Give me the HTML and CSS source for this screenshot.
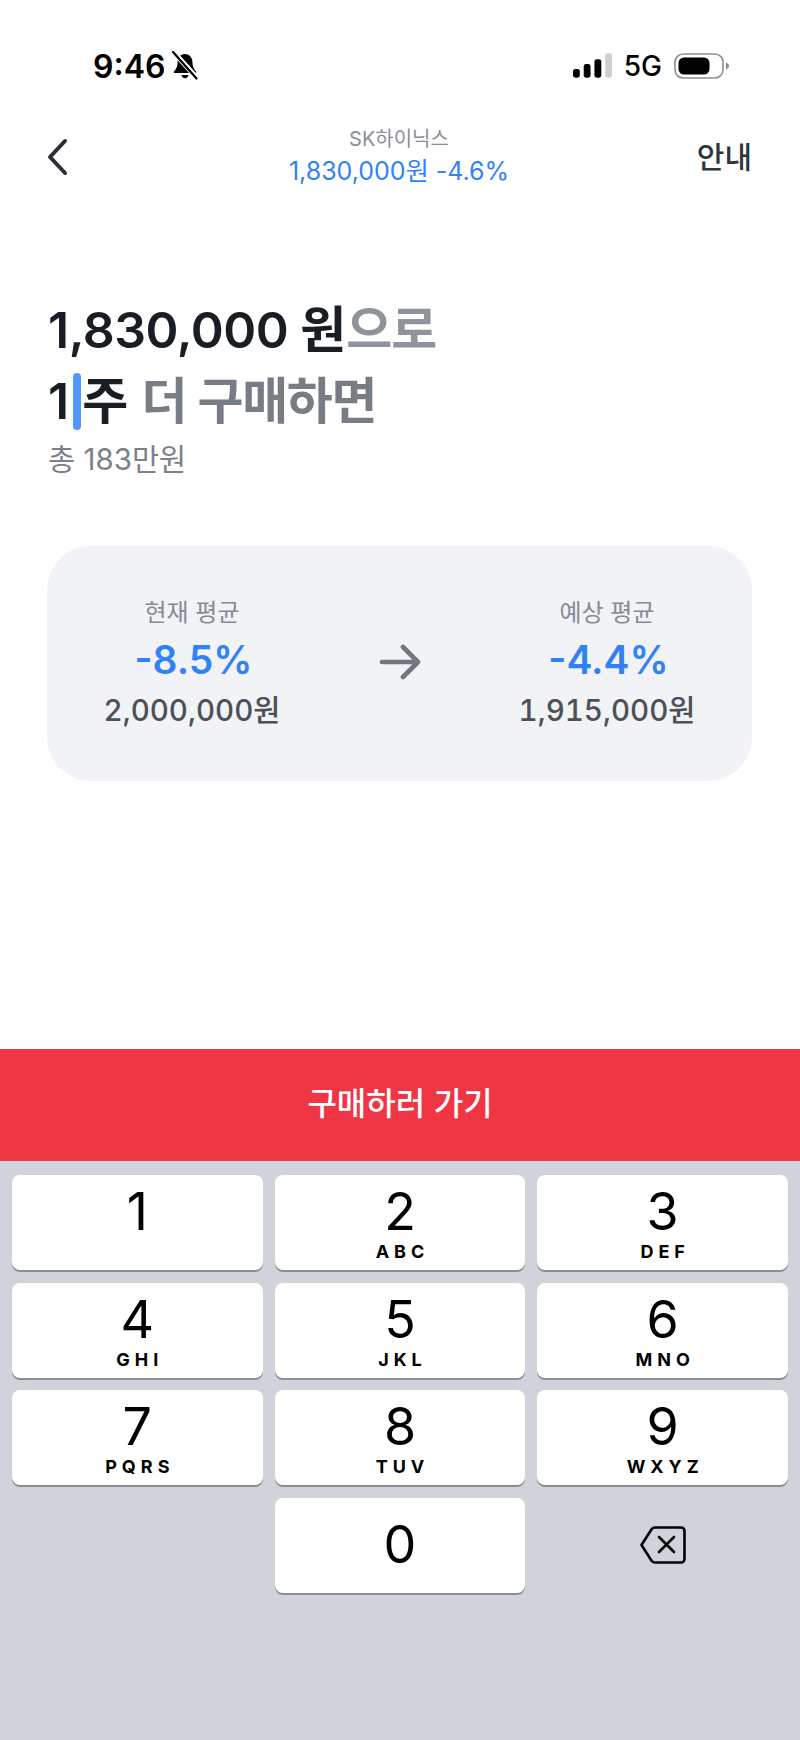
FILE: index.html
```html
<!DOCTYPE html>
<html lang="ko">
<head>
    <meta charset="UTF-8">
    <meta name="viewport" content="width=device-width, initial-scale=1.0">
    <title>SK하이닉스 물타기 계산</title>
    <link rel="stylesheet" href="styles.css">
</head>
<body>
    <div class="page">
        <!-- Status bar -->
        <div class="status-bar">
            <div class="status-left">
                <span class="clock">9:46</span>
                <svg class="bell" width="28" height="30" viewBox="0 0 28 30">
                    <path d="M14 3c-5 0-7.500 4-7.500 9 0 4-1.500 6-3.500 8.500-.6.800-.2 1.500.7 1.500h20.600c.9 0 1.300-.7.700-1.500-2-2.500-3.500-4.500-3.500-8.500 0-5-2.500-9-7.500-9z" fill="#000"/>
                    <path d="M10.500 24h7c-.3 2-1.700 3.200-3.500 3.200s-3.200-1.200-3.500-3.200z" fill="#000"/>
                    <path d="M3 1.500 26 27" stroke="#fff" stroke-width="5"/>
                    <path d="M2 1 25.500 27.500" stroke="#000" stroke-width="2.200" stroke-linecap="round"/>
                </svg>
            </div>
            <div class="status-right">
                <svg class="signal" width="39" height="26" viewBox="0 0 40 26">
                    <rect x="0" y="16" width="7" height="9" rx="2.500" fill="#000"/>
                    <rect x="11" y="11" width="7" height="14" rx="2.500" fill="#000"/>
                    <rect x="22" y="6" width="7" height="19" rx="2.500" fill="#000"/>
                    <rect x="33" y="0" width="7" height="25" rx="2.500" fill="#d0d0d0"/>
                </svg>
                <span class="network">5G</span>
                <svg class="battery" width="56" height="26" viewBox="0 0 56 26">
                    <rect x="1" y="1" width="48" height="24" rx="8" fill="none" stroke="#8e8e8e" stroke-width="1.600"/>
                    <rect x="4.500" y="4.500" width="31" height="17" rx="5.500" fill="#000"/>
                    <path d="M52 9.500c2 .8 3 2 3 3.500s-1 2.700-3 3.500z" fill="#8e8e8e"/>
                </svg>
            </div>
        </div>

        <!-- Top nav -->
        <div class="nav">
            <div class="nav-side">
                <svg class="back" width="24" height="38" viewBox="0 0 24 38">
                    <path d="M20 3 5 19l15 16" fill="none" stroke="#2b2f36" stroke-width="4" stroke-linecap="round" stroke-linejoin="round"/>
                </svg>
            </div>
            <div class="nav-title">
                <div class="stock-name">SK하이닉스</div>
                <div class="stock-price">1,830,000원 -4.6%</div>
            </div>
            <div class="nav-side nav-help">안내</div>
        </div>

        <!-- Headline -->
        <div class="headline">
            <div class="line"><span class="strong amount">1,830,000 </span><span class="strong">원</span><span class="light">으로</span></div>
            <div class="line"><span class="strong">1</span><span class="caret"></span><span class="strong">주</span><span class="muted"> 더 구매하면</span></div>
            <div class="total">총 183만원</div>
        </div>

        <!-- Average card -->
        <div class="card">
            <div class="avg">
                <div class="avg-label">현재 평균</div>
                <div class="avg-rate">-8.5%</div>
                <div class="avg-price">2,000,000원</div>
            </div>
            <svg class="arrow" width="42" height="36" viewBox="0 0 42 36">
                <path d="M3 18h35M24 3l15 15-15 15" fill="none" stroke="#72767e" stroke-width="4.600" stroke-linecap="round" stroke-linejoin="round"/>
            </svg>
            <div class="avg">
                <div class="avg-label">예상 평균</div>
                <div class="avg-rate">-4.4%</div>
                <div class="avg-price">1,915,000원</div>
            </div>
        </div>

        <!-- Buy button + keypad -->
        <div class="buy-btn">구매하러 가기</div>
        <div class="keypad">
            <div class="key"><span class="num">1</span></div>
            <div class="key"><span class="num">2</span><span class="letters">ABC</span></div>
            <div class="key"><span class="num">3</span><span class="letters">DEF</span></div>
            <div class="key"><span class="num">4</span><span class="letters">GHI</span></div>
            <div class="key"><span class="num">5</span><span class="letters">JKL</span></div>
            <div class="key"><span class="num">6</span><span class="letters">MNO</span></div>
            <div class="key"><span class="num">7</span><span class="letters">PQRS</span></div>
            <div class="key"><span class="num">8</span><span class="letters">TUV</span></div>
            <div class="key"><span class="num">9</span><span class="letters">WXYZ</span></div>
            <div class="key-empty"></div>
            <div class="key key-zero"><span class="num">0</span></div>
            <div class="key-empty">
                <svg class="backspace" width="48" height="40" viewBox="0 0 48 40">
                    <path d="M16 2.500h26c2 0 3.500 1.500 3.500 3.500v28c0 2-1.500 3.500-3.500 3.500H16c-1.200 0-2.300-.5-3.100-1.300L2.500 20 12.900 3.800C13.700 3 14.800 2.500 16 2.500z" fill="none" stroke="#000" stroke-width="2.600" stroke-linejoin="round"/>
                    <path d="M20 12l15 15M35 12 20 27" fill="none" stroke="#000" stroke-width="2.600" stroke-linecap="round"/>
                </svg>
            </div>
        </div>
    </div>
</body>
</html>
```

FILE: styles.css
```css
body {
    margin: 0;
    background-color: #fff;
    font-family: Inter, "Noto Sans CJK KR", sans-serif;
}
.page {
    width: 800px;
    height: 1740px;
    display: flex;
    flex-direction: column;
    overflow: hidden;
}
.status-bar {
    height: 40px;
    padding: 46px 70px 0 93px;
    display: flex;
    justify-content: space-between;
    align-items: center;
}
.status-left,
.status-right {
    display: flex;
    align-items: center;
}
.clock {
    font-size: 32px;
    font-weight: 600;
    color: #000;
}
.bell {
    margin-left: 6px;
}
.network {
    font-size: 28px;
    font-weight: 500;
    color: #000;
    margin: 0 12px;
}
.nav {
    height: 80px;
    margin-top: 29px;
    padding: 0 48px 0 45px;
    display: grid;
    grid-template-columns: 1fr auto 1fr;
    align-items: center;
}
.nav-title {
    text-align: center;
    padding-top: 3px;
    margin-left: 1px;
}
.stock-name {
    font-size: 20px;
    line-height: 28px;
    color: #8a8e96;
}
.stock-price {
    font-size: 25px;
    line-height: 36px;
    color: #3182f6;
}
.back {
    display: block;
    margin-top: 3px;
}
.nav-help {
    text-align: right;
    font-size: 30px;
    font-weight: 500;
    color: #30343c;
}
.headline {
    margin-top: 100px;
    padding: 0 48px;
}
.line {
    font-size: 50px;
    line-height: 71px;
    font-weight: 600;
    white-space: pre;
    display: flex;
    align-items: center;
}
.amount {
    letter-spacing: -0.5px;
}
.strong {
    color: #191d24;
}
.light {
    letter-spacing: -1px;
    color: #8e939c;
}
.muted {
    padding-left: 2px;
    letter-spacing: -1.300px;
    color: #777c85;
}
.caret {
    width: 8px;
    height: 57px;
    margin: 0 1px 0 4px;
    border-radius: 4px;
    background-color: #4e97ff;
}
.total {
    margin-top: 2px;
    font-size: 29.500px;
    line-height: 40px;
    color: #7b808a;
}
.card {
    margin: 67px 48px 0 47px;
    height: 235px;
    padding: 0 50px 3px;
    box-sizing: border-box;
    border-radius: 44px;
    background-color: #f1f3f6;
    display: flex;
    justify-content: space-between;
    align-items: center;
}
.avg {
    width: 190px;
    text-align: center;
    white-space: nowrap;
}
.avg-label {
    margin-top: 2px;
    font-size: 24px;
    line-height: 34px;
    color: #868b93;
}
.avg-rate {
    margin: 4px 0 4px;
    padding-left: 3px;
    font-size: 39px;
    line-height: 52px;
    font-weight: 600;
    color: #3182f6;
}
.avg-price {
    font-size: 29.500px;
    line-height: 40px;
    font-weight: 500;
    font-variant-numeric: tabular-nums;
    color: #4c5058;
}
.buy-btn {
    margin-top: auto;
    height: 112px;
    line-height: 110px;
    text-align: center;
    font-size: 32px;
    font-weight: 500;
    color: #fff;
    background-color: #f03545;
}
.keypad {
    height: 579px;
    box-sizing: border-box;
    padding: 14px 12px 0;
    background-color: #d0d3da;
    display: grid;
    grid-template-columns: repeat(3, 1fr);
    grid-auto-rows: 95px;
    gap: 12.500px 12px;
}
.key {
    background-color: #fff;
    border-radius: 8px;
    box-shadow: 0 2px 0 #8c8e94;
    display: flex;
    flex-direction: column;
    align-items: center;
    color: #000;
}
.key-zero {
    justify-content: center;
}
.num {
    font-size: 52px;
    line-height: 60px;
    margin-top: 7px;
}
.key-zero .num {
    margin-top: 0;
}
.letters {
    font-size: 18px;
    line-height: 20px;
    font-weight: 700;
    letter-spacing: 5px;
    margin-right: -5px;
}
.key-empty {
    display: flex;
    align-items: center;
    justify-content: center;
}
```
